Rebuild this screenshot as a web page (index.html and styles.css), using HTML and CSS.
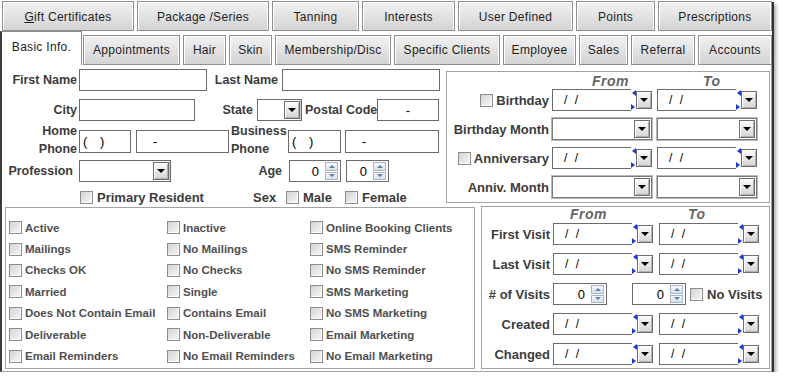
FILE: index.html
```html
<!DOCTYPE html>
<html lang="en">
<head>
    <meta charset="UTF-8">
    <title>Client Filter</title>
    <link rel="stylesheet" href="styles.css">
</head>
<body>
<div class="window">
    <div class="tabs tabs-top">
        <div class="tab"><span><u>G</u>ift Certificates</span></div>
        <div class="tab">Package /Series</div>
        <div class="tab">Tanning</div>
        <div class="tab">Interests</div>
        <div class="tab">User Defined</div>
        <div class="tab">Points</div>
        <div class="tab">Prescriptions</div>
    </div>
    <div class="tabs tabs-bottom">
        <div class="tab active">Basic Info.</div>
        <div class="tab">Appointments</div>
        <div class="tab">Hair</div>
        <div class="tab">Skin</div>
        <div class="tab">Membership/Disc</div>
        <div class="tab">Specific Clients</div>
        <div class="tab">Employee</div>
        <div class="tab">Sales</div>
        <div class="tab">Referral</div>
        <div class="tab">Accounts</div>
    </div>

    <div class="panel">
        <div class="upper">
            <!-- name / address block -->
            <div class="person">
                <div class="row">
                    <span class="lbl lead">First Name</span>
                    <span class="field w-first"></span>
                    <span class="lbl last-name">Last Name</span>
                    <span class="field w-last"></span>
                </div>
                <div class="row city-row">
                    <span class="lbl lead">City</span>
                    <span class="field w-city"></span>
                    <span class="lbl state">State</span>
                    <span class="select w-state"><span class="drop"></span></span>
                    <span class="lbl postal">Postal Code</span>
                    <span class="field w-postal">-</span>
                </div>
                <div class="row phone-row">
                    <span class="lbl lead two-line">Home<br>Phone</span>
                    <span class="field w-area">( )</span>
                    <span class="field w-phone">-</span>
                    <span class="lbl two-line business">Business<br>Phone</span>
                    <span class="field w-area2">( )</span>
                    <span class="field w-phone2">-</span>
                </div>
                <div class="row prof-row">
                    <span class="lbl lead prof">Profession</span>
                    <span class="select w-prof"><span class="drop"></span></span>
                    <span class="lbl age">Age</span>
                    <span class="spin w-age"><span class="spin-val">0</span><span class="spin-btns"><i></i><i></i></span></span>
                    <span class="spin w-age2"><span class="spin-val">0</span><span class="spin-btns"><i></i><i></i></span></span>
                </div>
                <div class="row flags-row">
                    <span class="check resident"><span class="cb"></span>Primary Resident</span>
                    <span class="lbl sex">Sex</span>
                    <span class="check male"><span class="cb"></span>Male</span>
                    <span class="check"><span class="cb"></span>Female</span>
                </div>
            </div>

            <!-- birthday / anniversary -->
            <div class="group dates">
                <div class="col-head">
                    <span class="from">From</span>
                    <span>To</span>
                </div>
                <div class="date-row first">
                    <span class="lbl"><span class="cb"></span>Birthday</span>
                    <span class="date"><span class="date-field">/ /</span><span class="nudge"></span><span class="drop"></span></span>
                    <span class="date second"><span class="date-field">/ /</span><span class="nudge"></span><span class="drop"></span></span>
                </div>
                <div class="date-row">
                    <span class="lbl">Birthday Month</span>
                    <span class="select month"><span class="drop"></span></span>
                    <span class="select month second"><span class="drop"></span></span>
                </div>
                <div class="date-row">
                    <span class="lbl"><span class="cb"></span>Anniversary</span>
                    <span class="date"><span class="date-field">/ /</span><span class="nudge"></span><span class="drop"></span></span>
                    <span class="date second"><span class="date-field">/ /</span><span class="nudge"></span><span class="drop"></span></span>
                </div>
                <div class="date-row">
                    <span class="lbl">Anniv. Month</span>
                    <span class="select month"><span class="drop"></span></span>
                    <span class="select month second"><span class="drop"></span></span>
                </div>
            </div>
        </div>

        <div class="lower">
            <div class="group flags-grid">
                <span class="check small"><span class="cb"></span>Active</span>
                <span class="check small"><span class="cb"></span>Mailings</span>
                <span class="check small"><span class="cb"></span>Checks OK</span>
                <span class="check small"><span class="cb"></span>Married</span>
                <span class="check small"><span class="cb"></span>Does Not Contain Email</span>
                <span class="check small"><span class="cb"></span>Deliverable</span>
                <span class="check small"><span class="cb"></span>Email Reminders</span>

                <span class="check small"><span class="cb"></span>Inactive</span>
                <span class="check small"><span class="cb"></span>No Mailings</span>
                <span class="check small"><span class="cb"></span>No Checks</span>
                <span class="check small"><span class="cb"></span>Single</span>
                <span class="check small"><span class="cb"></span>Contains Email</span>
                <span class="check small"><span class="cb"></span>Non-Deliverable</span>
                <span class="check small"><span class="cb"></span>No Email Reminders</span>

                <span class="check small"><span class="cb"></span>Online Booking Clients</span>
                <span class="check small"><span class="cb"></span>SMS Reminder</span>
                <span class="check small"><span class="cb"></span>No SMS Reminder</span>
                <span class="check small"><span class="cb"></span>SMS Marketing</span>
                <span class="check small"><span class="cb"></span>No SMS Marketing</span>
                <span class="check small"><span class="cb"></span>Email Marketing</span>
                <span class="check small"><span class="cb"></span>No Email Marketing</span>
            </div>

            <div class="group visits">
                <div class="col-head">
                    <span class="from">From</span>
                    <span>To</span>
                </div>
                <div class="date-row first">
                    <span class="lbl">First Visit</span>
                    <span class="date"><span class="date-field">/ /</span><span class="nudge"></span><span class="drop"></span></span>
                    <span class="date second"><span class="date-field">/ /</span><span class="nudge"></span><span class="drop"></span></span>
                </div>
                <div class="date-row">
                    <span class="lbl">Last Visit</span>
                    <span class="date"><span class="date-field">/ /</span><span class="nudge"></span><span class="drop"></span></span>
                    <span class="date second"><span class="date-field">/ /</span><span class="nudge"></span><span class="drop"></span></span>
                </div>
                <div class="date-row">
                    <span class="lbl"># of Visits</span>
                    <span class="spin w-visits"><span class="spin-val">0</span><span class="spin-btns"><i></i><i></i></span></span>
                    <span class="spin w-visits second"><span class="spin-val">0</span><span class="spin-btns"><i></i><i></i></span></span>
                    <span class="check no-visits"><span class="cb"></span>No Visits</span>
                </div>
                <div class="date-row">
                    <span class="lbl">Created</span>
                    <span class="date"><span class="date-field">/ /</span><span class="nudge"></span><span class="drop"></span></span>
                    <span class="date second"><span class="date-field">/ /</span><span class="nudge"></span><span class="drop"></span></span>
                </div>
                <div class="date-row">
                    <span class="lbl">Changed</span>
                    <span class="date"><span class="date-field">/ /</span><span class="nudge"></span><span class="drop"></span></span>
                    <span class="date second"><span class="date-field">/ /</span><span class="nudge"></span><span class="drop"></span></span>
                </div>
            </div>
        </div>
    </div>
</div>
</body>
</html>
```

FILE: styles.css
```css
body {
    margin: 0;
    background: #fff;
    font-family: "Liberation Sans", Arial, sans-serif;
    color: #3c3c3c;
}
.window {
    width: 772px;
    height: 372px;
    display: flex;
    flex-direction: column;
    box-shadow: 2px 2px 0 #333, 4px 4px 4px rgba(0,0,0,0.35);
}

/* tabs */
.tabs {
    display: grid;
    font-size: 12px;
    letter-spacing: 0.3px;
    color: #1e1e1e;
}
.tabs-top {
    grid-template-columns: 135px 135px 90px 96px 118px 82px 1fr;
    padding: 1px 0 0 2px;
    height: 30px;
}
.tabs-top .tab {
    padding-top: 2px;
}
.tabs-bottom {
    grid-template-columns: 83px 100px 46px 46px 119px 109px 76px 52px 67px 1fr;
    height: 34px;
    align-items: end;
}
.tab {
    box-sizing: border-box;
    height: 30px;
    margin-right: 3px;
    border: 1px solid #8e8e8e;
    box-shadow: inset 1px 1px 0 #fff, inset -1px 0 0 #fff;
    background: linear-gradient(#f2f2f2, #d3d3d3);
    display: flex;
    align-items: center;
    justify-content: center;
    white-space: nowrap;
}
.tab:last-child {
    margin-right: 0;
}
.tab.active {
    height: 34px;
    margin-right: 1px;
    padding-bottom: 3px;
    background: #fff;
    border-left: 2px solid #3a3a3a;
    border-bottom: none;
    box-shadow: none;
}

.panel {
    flex: 1;
    border-left: 2px solid #3a3a3a;
    border-right: 1px solid #a0a0a0;
    border-bottom: 1px solid #a0a0a0;
}
.upper {
    display: flex;
    height: 141px;
}
.lower {
    display: flex;
    align-items: flex-start;
    gap: 6px;
    padding-left: 3px;
}

/* generic controls */
.lbl {
    font-weight: bold;
    font-size: 12.5px;
    white-space: nowrap;
    flex: none;
    box-sizing: border-box;
}
.field, .select, .spin, .date-field {
    box-sizing: border-box;
    height: 22px;
    border: 1px solid #6b6b6b;
    background: #fff;
    flex: none;
    font-size: 13px;
    color: #000;
    display: flex;
    align-items: center;
}
.select {
    justify-content: flex-end;
    padding-right: 1px;
    box-shadow: inset -1px 0 0 #c8c8c8;
}
.drop {
    box-sizing: border-box;
    width: 16px;
    height: 18px;
    flex: none;
    border: 1px solid #6e6e6e;
    box-shadow: inset 1px 1px 0 #fff, inset -1px -1px 0 #b0b0b0;
    background: linear-gradient(#fcfcfc, #d4d4d4);
    display: flex;
    align-items: center;
    justify-content: center;
}
.drop::after {
    content: "";
    border-left: 4px solid transparent;
    border-right: 4px solid transparent;
    border-top: 4px solid #000;
}
.spin {
    padding-right: 2px;
}
.spin-val {
    flex: 1;
    text-align: right;
    padding-right: 6px;
}
.spin-btns {
    width: 13px;
    height: 18px;
    display: flex;
    flex-direction: column;
    gap: 1px;
}
.spin-btns i {
    flex: 1;
    border: 1px solid #a9b4c8;
    background: linear-gradient(#f8f9fc, #d8dfeb);
    display: flex;
    align-items: center;
    justify-content: center;
}
.spin-btns i::after {
    content: "";
    border-left: 3px solid transparent;
    border-right: 3px solid transparent;
    border-bottom: 3px solid #5b7cc0;
}
.spin-btns i:last-child::after {
    border-bottom: none;
    border-top: 3px solid #5b7cc0;
}
.cb {
    box-sizing: border-box;
    width: 13px;
    height: 13px;
    flex: none;
    border: 1px solid #8c8c8c;
    background: linear-gradient(135deg, #d4d4d4, #f7f7f7);
    box-shadow: inset -1px -1px 0 #fbfbfb;
}
.check {
    display: flex;
    align-items: center;
    gap: 4px;
    font-weight: bold;
    font-size: 13px;
    white-space: nowrap;
    flex: none;
}

/* person block */
.person {
    width: 444px;
    padding-top: 4px;
    flex: none;
}
.row {
    display: flex;
    align-items: center;
    height: 22px;
}
.lead {
    width: 75px;
    margin-right: 2px;
    text-align: right;
}
.w-first { width: 128px; }
.last-name {
    width: 72px;
    margin-right: 3px;
    padding-right: 1px;
    text-align: right;
}
.w-last { width: 158px; }

.city-row { margin-top: 8px; }
.w-city { width: 116px; }
.state {
    width: 58px;
    margin-right: 4px;
    text-align: right;
}
.w-state { width: 45px; }
.postal {
    width: 75px;
    padding-left: 3px;
}
.w-postal {
    width: 62px;
    justify-content: center;
}

.phone-row {
    margin-top: 9px;
    height: 23px;
}
.phone-row .field { height: 23px; }
.two-line {
    line-height: 18px;
    align-self: flex-start;
    margin-top: -8px;
}
.w-area, .w-area2 {
    padding-left: 3px;
    word-spacing: 9px;
}
.w-area { width: 52px; }
.w-phone {
    width: 93px;
    margin-left: 5px;
    padding-left: 16px;
}
.business {
    width: 57px;
    margin-left: 2px;
}
.w-area2 { width: 53px; }
.w-phone2 {
    width: 94px;
    margin-left: 4px;
    padding-left: 16px;
}

.prof-row { margin-top: 7px; }
.prof { padding-right: 4px; }
.w-prof { width: 92px; }
.age {
    width: 112px;
    margin-right: 6px;
    padding-right: 1px;
    text-align: right;
}
.w-age { width: 52px; }
.w-age2 {
    width: 43px;
    margin-left: 5px;
}

.flags-row {
    margin-top: 8px;
    height: 14px;
}
.resident {
    margin-left: 78px;
    width: 173px;
}
.sex {
    width: 33px;
    font-size: 13px;
}
.male { width: 59px; }

/* group boxes */
.group {
    box-sizing: border-box;
    border: 1px solid #a3a3a3;
    box-shadow: inset 1px 1px 0 #fff, 1px 1px 0 #fff;
    flex: none;
}
.col-head {
    display: flex;
    height: 13px;
    font-style: italic;
    font-weight: bold;
    font-size: 14px;
    line-height: 13px;
    letter-spacing: 0.5px;
    color: #666;
}
.date-row {
    display: flex;
    align-items: center;
    height: 22px;
}
.date-row .lbl {
    font-size: 13px;
    padding-right: 3px;
    display: flex;
    align-items: center;
    justify-content: flex-end;
    gap: 3px;
}
.date {
    display: flex;
    align-items: center;
    width: 100px;
    flex: none;
}
.date-field {
    flex: 1;
    border-right: none;
    padding-left: 11px;
    font-size: 12px;
    letter-spacing: 2px;
}
.nudge {
    box-sizing: border-box;
    width: 5px;
    height: 22px;
    flex: none;
    padding: 1px 0;
    display: flex;
    flex-direction: column;
    justify-content: space-between;
}
.nudge::before, .nudge::after {
    content: "";
    width: 0;
    height: 0;
    border-top: 3px solid transparent;
    border-bottom: 3px solid transparent;
}
.nudge::before {
    align-self: flex-end;
    border-right: 4px solid #1638e6;
}
.nudge::after {
    border-left: 4px solid #1638e6;
}
.month {
    width: 100px;
    border-color: #7a7a7a;
    box-shadow: 0 0 0 1px #b8b8b8;
}

.dates {
    margin-top: 6px;
    width: 324px;
    height: 132px;
    padding-top: 3px;
}
.dates .from {
    margin-left: 145px;
    width: 111px;
}
.dates .date-row { margin-top: 7px; }
.dates .date-row.first { margin-top: 1px; }
.dates .lbl { width: 105px; }
.dates .second { margin-left: 5px; }

.flags-grid {
    margin-top: 1px;
    width: 470px;
    height: 162px;
    padding: 9px 0 0 3px;
    display: grid;
    grid-template-columns: 158px 143px 1fr;
    grid-template-rows: repeat(7, 21.4px);
    grid-auto-flow: column;
    align-items: center;
}
.check.small {
    font-size: 11.5px;
    color: #4f4f4f;
    gap: 3px;
}

.visits {
    width: 289px;
    height: 163px;
    padding-top: 1px;
}
.visits .from {
    margin-left: 88px;
    width: 118px;
}
.visits .date-row { margin-top: 8px; }
.visits .date-row.first { margin-top: 2px; }
.visits .lbl { width: 71px; }
.visits .date.second { margin-left: 6px; }
.w-visits { width: 54px; }
.w-visits.second { margin-left: 25px; }
.no-visits {
    margin-left: 4px;
    color: #3a3a3a;
}
```
